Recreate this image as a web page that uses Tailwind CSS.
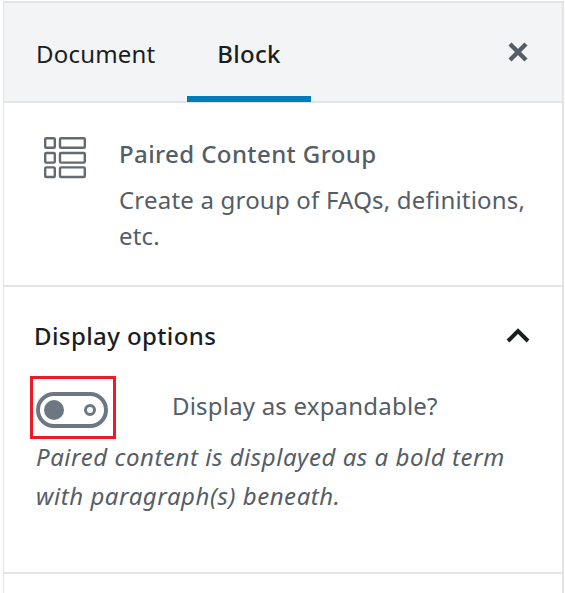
<!doctype html>
<html lang="en">
  <head>
    <meta charset="UTF-8" />
    <title>Block settings</title>
    <script src="https://cdn.jsdelivr.net/npm/@tailwindcss/browser@4"></script>
  </head>
  <body class="bg-white h-[593px] overflow-hidden font-['Noto_Sans','Open_Sans',sans-serif]">
    <div class="ml-[3px] mr-px mt-px h-[592px] border-t-2 border-l border-r-2 border-[#e2e4e7] flex flex-col">
      <div class="h-[100px] shrink-0 bg-[#f3f4f5] border-b-2 border-[#e2e4e7] flex items-stretch relative">
        <div class="w-[183px] pl-[32px] pt-[33px] text-[24px] leading-[36px] text-[#191e23] tracking-[0.2px]">Document</div>
        <div class="w-[124px] h-[99px] border-b-[6px] border-[#007cba] text-center pt-[33px] text-[24px] leading-[36px] font-medium text-[#191e23] tracking-[0.3px]">Block</div>
        <svg class="absolute left-[502px] top-[37px] w-[24px] h-[24px]" viewBox="0 0 24 24" fill="none" stroke="#555d66" stroke-width="4.4">
          <path d="M4 4 L20 20 M20 4 L4 20" />
        </svg>
      </div>
      <div class="h-[184px] shrink-0 border-b-2 border-[#e2e4e7] flex pl-[40px] pt-[33px]">
        <svg class="w-[42px] h-[42px] shrink-0 mt-[1px]" viewBox="0 0 42 42" fill="none" stroke="#636a72" stroke-width="2.4">
          <rect x="1.2" y="1.2" width="9.6" height="9.6" rx="1" />
          <rect x="16" y="1.2" width="24.8" height="9.6" rx="1" />
          <rect x="1.2" y="16" width="9.6" height="9.6" rx="1" />
          <rect x="16" y="16" width="24.8" height="9.6" rx="1" />
          <rect x="1.2" y="30.4" width="9.6" height="9.6" rx="1" />
          <rect x="16" y="30.4" width="24.8" height="9.6" rx="1" />
        </svg>
        <div class="ml-[33px] w-[420px]">
          <div class="text-[24px] leading-[36px] font-medium text-[#555d66] tracking-[0.4px]">Paired Content Group</div>
          <p class="mt-[10px] text-[24px] leading-[36px] text-[#555d66] tracking-[0.2px]">Create a group of FAQs, definitions, etc.</p>
        </div>
      </div>
      <div class="h-[287px] shrink-0 border-b-2 border-[#e2e4e7] pl-[30px] pr-[30px] pt-[31px]">
        <div class="flex items-center justify-between h-[36px]">
          <span class="text-[24px] leading-[36px] font-medium text-[#191e23] tracking-[0.4px]">Display options</span>
          <svg class="w-[28px] h-[20px] -mt-[2px]" viewBox="0 0 28 20" fill="none" stroke="#191e23" stroke-width="4">
            <path d="M4 16 L14 6 L24 16" />
          </svg>
        </div>
        <div class="mt-[22px] flex items-center h-[63px] -ml-[4px]">
          <div class="w-[86px] h-[63px] border-[3px] border-[#eb1c24] pl-[3px] pt-[13px] shrink-0">
            <div class="w-[72px] h-[36px] rounded-full border-[4px] border-[#6c7781] flex items-center justify-between pl-[4px] pr-[8px]">
              <span class="w-[20px] h-[20px] rounded-full bg-[#6c7781]"></span>
              <span class="w-[12px] h-[12px] rounded-full border-[3px] border-[#6c7781]"></span>
            </div>
          </div>
          <span class="ml-[56px] pb-[3px] text-[24px] leading-[36px] text-[#555d66] tracking-[0.2px]">Display as expandable?</span>
        </div>
        <p class="-mt-[2px] ml-[2px] max-w-[490px] text-[24px] leading-[39px] italic text-[#555d66] tracking-[0.55px]">Paired content is displayed as a bold term with paragraph(s) beneath.</p>
      </div>
    </div>
  </body>
</html>
